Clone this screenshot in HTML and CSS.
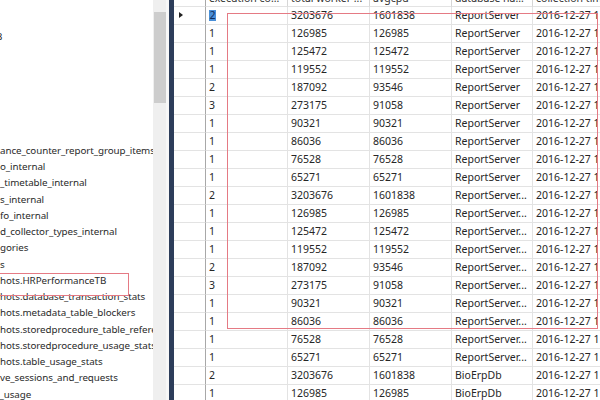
FILE: index.html
```html
<!DOCTYPE html>
<html>
<head>
<meta charset="utf-8">
<link rel="stylesheet" href="styles.css">
</head>
<body>
<div class="app">
  <div class="tree">
    <ul class="tree-list">
      <li class="cut">B</li>
      <li></li><li></li><li></li><li></li><li></li><li></li>
      <li>ance_counter_report_group_items</li>
      <li>o_internal</li>
      <li>_timetable_internal</li>
      <li>s_internal</li>
      <li>fo_internal</li>
      <li>d_collector_types_internal</li>
      <li>gories</li>
      <li>s</li>
      <li>hots.HRPerformanceTB</li>
      <li>hots.database_transaction_stats</li>
      <li>hots.metadata_table_blockers</li>
      <li>hots.storedprocedure_table_references</li>
      <li>hots.storedprocedure_usage_stats</li>
      <li>hots.table_usage_stats</li>
      <li>ve_sessions_and_requests</li>
      <li class="cut">t_usage</li>
    </ul>
    <div class="mark-tree"></div>
  </div>
  <div class="vscroll"><div class="thumb"></div></div>
  <div class="gap"></div>
  <div class="splitter"></div>
  <div class="grid">
    <div class="table">
      <div class="row head">
        <div class="c rh"></div>
        <div class="c">execution co...</div>
        <div class="c">total worker ...</div>
        <div class="c">avgcpu</div>
        <div class="c">database na...</div>
        <div class="c">collection time</div>
      </div>
      <div class="row"><div class="c rh"><span class="arrow"></span></div><div class="c"><span class="sel">2</span></div><div class="c">3203676</div><div class="c">1601838</div><div class="c">ReportServer</div><div class="c">2016-12-27 1</div></div>
      <div class="row"><div class="c rh"></div><div class="c">1</div><div class="c">126985</div><div class="c">126985</div><div class="c">ReportServer</div><div class="c">2016-12-27 1</div></div>
      <div class="row"><div class="c rh"></div><div class="c">1</div><div class="c">125472</div><div class="c">125472</div><div class="c">ReportServer</div><div class="c">2016-12-27 1</div></div>
      <div class="row"><div class="c rh"></div><div class="c">1</div><div class="c">119552</div><div class="c">119552</div><div class="c">ReportServer</div><div class="c">2016-12-27 1</div></div>
      <div class="row"><div class="c rh"></div><div class="c">2</div><div class="c">187092</div><div class="c">93546</div><div class="c">ReportServer</div><div class="c">2016-12-27 1</div></div>
      <div class="row"><div class="c rh"></div><div class="c">3</div><div class="c">273175</div><div class="c">91058</div><div class="c">ReportServer</div><div class="c">2016-12-27 1</div></div>
      <div class="row"><div class="c rh"></div><div class="c">1</div><div class="c">90321</div><div class="c">90321</div><div class="c">ReportServer</div><div class="c">2016-12-27 1</div></div>
      <div class="row"><div class="c rh"></div><div class="c">1</div><div class="c">86036</div><div class="c">86036</div><div class="c">ReportServer</div><div class="c">2016-12-27 1</div></div>
      <div class="row"><div class="c rh"></div><div class="c">1</div><div class="c">76528</div><div class="c">76528</div><div class="c">ReportServer</div><div class="c">2016-12-27 1</div></div>
      <div class="row"><div class="c rh"></div><div class="c">1</div><div class="c">65271</div><div class="c">65271</div><div class="c">ReportServer</div><div class="c">2016-12-27 1</div></div>
      <div class="row"><div class="c rh"></div><div class="c">2</div><div class="c">3203676</div><div class="c">1601838</div><div class="c">ReportServer...</div><div class="c">2016-12-27 1</div></div>
      <div class="row"><div class="c rh"></div><div class="c">1</div><div class="c">126985</div><div class="c">126985</div><div class="c">ReportServer...</div><div class="c">2016-12-27 1</div></div>
      <div class="row"><div class="c rh"></div><div class="c">1</div><div class="c">125472</div><div class="c">125472</div><div class="c">ReportServer...</div><div class="c">2016-12-27 1</div></div>
      <div class="row"><div class="c rh"></div><div class="c">1</div><div class="c">119552</div><div class="c">119552</div><div class="c">ReportServer...</div><div class="c">2016-12-27 1</div></div>
      <div class="row"><div class="c rh"></div><div class="c">2</div><div class="c">187092</div><div class="c">93546</div><div class="c">ReportServer...</div><div class="c">2016-12-27 1</div></div>
      <div class="row"><div class="c rh"></div><div class="c">3</div><div class="c">273175</div><div class="c">91058</div><div class="c">ReportServer...</div><div class="c">2016-12-27 1</div></div>
      <div class="row"><div class="c rh"></div><div class="c">1</div><div class="c">90321</div><div class="c">90321</div><div class="c">ReportServer...</div><div class="c">2016-12-27 1</div></div>
      <div class="row"><div class="c rh"></div><div class="c">1</div><div class="c">86036</div><div class="c">86036</div><div class="c">ReportServer...</div><div class="c">2016-12-27 1</div></div>
      <div class="row"><div class="c rh"></div><div class="c">1</div><div class="c">76528</div><div class="c">76528</div><div class="c">ReportServer...</div><div class="c">2016-12-27 1</div></div>
      <div class="row"><div class="c rh"></div><div class="c">1</div><div class="c">65271</div><div class="c">65271</div><div class="c">ReportServer...</div><div class="c">2016-12-27 1</div></div>
      <div class="row"><div class="c rh"></div><div class="c">2</div><div class="c">3203676</div><div class="c">1601838</div><div class="c">BioErpDb</div><div class="c">2016-12-27 1</div></div>
      <div class="row"><div class="c rh"></div><div class="c">1</div><div class="c">126985</div><div class="c">126985</div><div class="c">BioErpDb</div><div class="c">2016-12-27 1</div></div>
    </div>
    <div class="mark-grid"></div>
  </div>
</div>
</body>
</html>
```

FILE: styles.css
```css
* { box-sizing: border-box; }
html, body { margin: 0; padding: 0; background: #fff; }
body { width: 600px; height: 400px; overflow: hidden; font-family: "Noto Sans", "Open Sans", sans-serif; color: #222; }

.app { display: flex; width: 600px; height: 400px; overflow: hidden; }

.tree { position: relative; width: 153px; flex: none; overflow: hidden; background: #fff; }
.tree-list { list-style: none; margin: 0; padding: 28.9px 0 0 0; font-size: 9.8px; letter-spacing: -0.08px; line-height: 16.27px; color: #2a2a2a; }
.tree-list li { height: 16.27px; white-space: nowrap; overflow: hidden; }
.tree-list li.cut { margin-left: -4px; }
.mark-tree { position: absolute; left: -2px; top: 273px; width: 131px; height: 23px; border: 1.5px solid #e57a84; }

.vscroll { width: 13px; flex: none; background: #efefef; padding: 12px 0 0 1px; }
.thumb { width: 12px; height: 91px; background: #cdcdcd; }
.gap { width: 3px; flex: none; background: #f7f7f7; }
.splitter { width: 5px; flex: none; background: #2d3d5a; }

.grid { position: relative; flex: 1; overflow: hidden; background: #fff; font-size: 10.5px; }
.table { margin-top: -9px; }
.row { display: grid; grid-template-columns: 32px 82px 82px 82px 81px 80px; height: 18px; }
.row.head { height: 16px; }
.c { border-right: 1px solid #e3e3e3; border-bottom: 1px solid #e3e3e3; padding-left: 3px; line-height: 17px; white-space: nowrap; overflow: hidden; color: #262626; }
.head .c { line-height: 15px; color: #333; border-right-color: #d6d6d6; }
.c.rh { border-right-color: #a8a8a8; position: relative; padding: 0; }
.arrow { position: absolute; left: 5px; top: 5px; width: 0; height: 0; border-top: 3.5px solid transparent; border-bottom: 3.5px solid transparent; border-left: 4.5px solid #222; }
.sel { background: #4a8fd8; color: #0f2d5c; padding: 0 0.5px; display: inline-block; line-height: 11px; }

.mark-grid { position: absolute; left: 53px; top: 13px; width: 371px; height: 316px; border: 1.5px solid #e57a84; }
```
